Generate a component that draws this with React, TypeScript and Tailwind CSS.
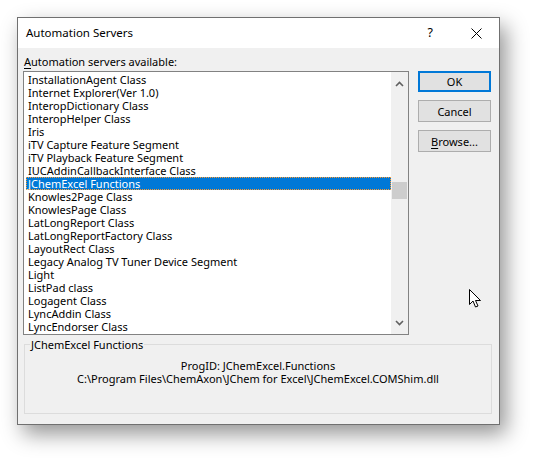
import React from "react";

const items = [
  "InstallationAgent Class",
  "Internet Explorer(Ver 1.0)",
  "InteropDictionary Class",
  "InteropHelper Class",
  "Iris",
  "iTV Capture Feature Segment",
  "iTV Playback Feature Segment",
  "IUCAddinCallbackInterface Class",
  "JChemExcel Functions",
  "Knowles2Page Class",
  "KnowlesPage Class",
  "LatLongReport Class",
  "LatLongReportFactory Class",
  "LayoutRect Class",
  "Legacy Analog TV Tuner Device Segment",
  "Light",
  "ListPad class",
  "Logagent Class",
  "LyncAddin Class",
  "LyncEndorser Class",
];

const font = { fontFamily: '"Segoe UI", "Noto Sans", sans-serif' };

export default function App() {
  return (
    <div
      className="relative w-[548px] h-[473px] bg-white pl-[17px] pt-[17px] text-[11px] text-black"
      style={font}
    >
      <div className="w-[483px] h-[408px] border border-[#707070] flex flex-col shadow-[6px_9px_20px_rgba(0,0,0,0.42)] bg-[#f0f0f0]">
        {/* Title bar */}
        <div className="h-[30px] bg-white flex items-center shrink-0">
          <span className="ml-[8px] text-[11.5px] leading-none">Automation Servers</span>
          <span className="ml-auto mr-[38px] text-[12.5px] leading-none">?</span>
          <svg width="11" height="11" viewBox="0 0 11 11" className="mr-[17px]">
            <path d="M0.5 0.5 L10.5 10.5 M10.5 0.5 L0.5 10.5" stroke="#000" strokeWidth="1" />
          </svg>
        </div>
        {/* Body */}
        <div className="flex-1 flex flex-col px-[5px] pt-[6px]">
          <div className="h-[15px] leading-[15px] ml-[1px]">
            <span className="underline underline-offset-2">A</span>utomation servers available:
          </div>
          <div className="flex mt-[2px]">
            <div className="w-[386px] h-[264px] border border-[#828282] bg-white flex">
              <div className="flex-1 pt-[1px] pl-[2px] flex flex-col">
                {items.map((it, i) =>
                  it === "JChemExcel Functions" ? (
                    <div
                      key={i}
                      className="h-[13px] leading-[13px] pl-[2px] bg-[#0078d7] text-white whitespace-nowrap outline-1 outline-dotted outline-[#ff9a2e] -outline-offset-1"
                    >
                      {it}
                    </div>
                  ) : (
                    <div key={i} className="h-[13px] leading-[13px] pl-[2px] whitespace-nowrap">
                      {it}
                    </div>
                  )
                )}
              </div>
              <div className="w-[17px] bg-[#f0f0f0] flex flex-col items-center">
                <svg width="9" height="6" viewBox="0 0 9 6" className="mt-[9px]">
                  <path d="M1 5 L4.5 1.5 L8 5" stroke="#606060" strokeWidth="1.6" fill="none" />
                </svg>
                <div className="w-[15px] h-[17px] bg-[#cdcdcd] mt-[95px]" />
                <svg width="9" height="6" viewBox="0 0 9 6" className="mt-auto mb-[8px]">
                  <path d="M1 1 L4.5 4.5 L8 1" stroke="#606060" strokeWidth="1.6" fill="none" />
                </svg>
              </div>
            </div>
            <div className="ml-[9px] flex flex-col gap-[8px]">
              <div className="w-[73px] h-[21px] border-2 border-[#0078d7] bg-[#e1e1e1] flex items-center justify-center leading-none">
                OK
              </div>
              <div className="w-[73px] h-[22px] border border-[#adadad] bg-[#e1e1e1] flex items-center justify-center leading-none">
                Cancel
              </div>
              <div className="w-[73px] h-[22px] border border-[#adadad] bg-[#e1e1e1] flex items-center justify-center leading-none">
                <span>
                  <span className="underline underline-offset-2">B</span>rowse...
                </span>
              </div>
            </div>
          </div>
          <fieldset className="mt-[3px] ml-[1px] w-[468px] h-[76px] border border-[#dcdcdc] pl-[5px]">
            <legend className="px-[1px] leading-[13px]">JChemExcel Functions</legend>
            <div className="text-center leading-[13px] mt-[8px] pr-[5px]">
              <div>ProgID: JChemExcel.Functions</div>
              <div>C:\Program Files\ChemAxon\JChem for Excel\JChemExcel.COMShim.dll</div>
            </div>
          </fieldset>
        </div>
      </div>
      {/* Mouse cursor */}
      <svg className="absolute left-[469px] top-[289px]" width="13" height="20" viewBox="0 0 13 20">
        <path
          d="M0.5 0.5 L0.5 15.5 L4 12 L6.5 18 L9 17 L6.5 11.5 L11.5 11.5 Z"
          fill="#fff"
          stroke="#000"
          strokeWidth="1"
          strokeLinejoin="round"
        />
      </svg>
    </div>
  );
}
